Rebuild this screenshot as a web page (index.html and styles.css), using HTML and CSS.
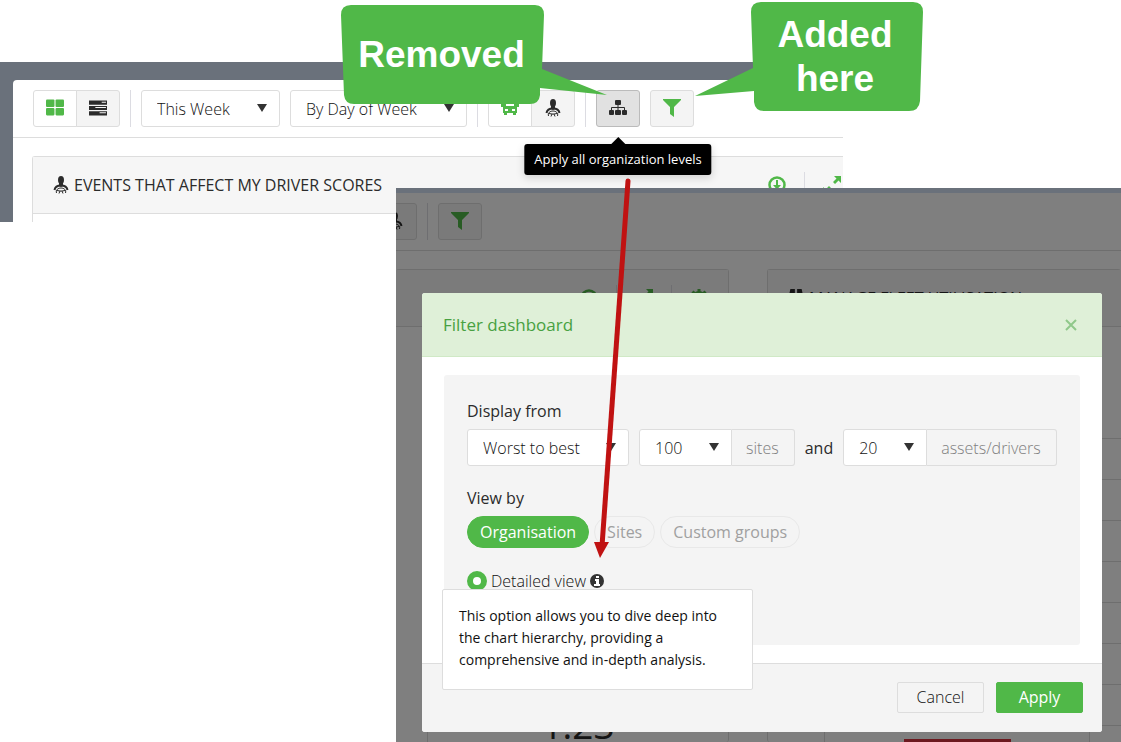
FILE: index.html
```html
<!DOCTYPE html>
<html lang="en">
<head>
  <meta charset="UTF-8">
  <meta name="viewport" content="width=device-width, initial-scale=1.0">
  <title>Filter dashboard</title>
  <link rel="stylesheet" href="styles.css">
</head>
<body>
  <!-- shared icons -->
  <svg class="sprite" aria-hidden="true">
    <symbol id="i-grid" viewBox="0 0 17 16">
      <rect width="8" height="7" rx="1"/><rect x="9" width="8" height="7" rx="1"/>
      <rect y="8" width="8" height="7" rx="1"/><rect x="9" y="8" width="8" height="7" rx="1"/>
    </symbol>
    <symbol id="i-rows" viewBox="0 0 17 16">
      <path fill-rule="evenodd" d="M0 1h17v4H0zM12 2v1h4V2zM0 6h17v4H0zM6 7v1h10V7zM0 11h17v4H0zM10 12v1h6v-1z"/>
    </symbol>
    <symbol id="i-driver" viewBox="0 0 14 18">
      <ellipse cx="7" cy="4" rx="3" ry="4"/>
      <path d="M5 7h4v3l-2 1-2-1z"/>
      <path fill="none" stroke="currentColor" stroke-width="2" d="M.5 14C1 11 3 9.500 7 9.500s6 1.500 6.500 4.500"/>
      <path fill="none" stroke="currentColor" d="M2.500 17c-1-3 1.500-5 4.500-5s5.500 2 4.500 5M3 14.500l3 .5h2l3-.5M6 15l-1 2.500M8 15l1 2.500"/>
    </symbol>
    <symbol id="i-car" viewBox="0 0 18 18">
      <path fill-rule="evenodd" d="M4 0h10l2 2v12h-1v2h-3v-2H6v2H3v-2H2V2zM5 3v4h8V3zM4 10v2h3v-2zM11 10v2h3v-2zM0 3h2v5H0zM16 3h2v5h-2z"/>
    </symbol>
    <symbol id="i-tree" viewBox="0 0 18 16">
      <rect x="6" width="6" height="5" rx="1"/><rect y="10" width="5" height="5" rx="1"/>
      <rect x="6" y="10" width="6" height="5" rx="1"/><rect x="13" y="10" width="5" height="5" rx="1"/>
      <path fill="none" stroke="currentColor" d="M9 4v7M2.500 11V7.500h13V11"/>
    </symbol>
    <symbol id="i-filter" viewBox="0 0 18 18"><path d="M0 0h18v1l-7 7v10l-4-3V8L0 1z"/></symbol>
    <symbol id="i-down" viewBox="0 0 18 18">
      <circle cx="9" cy="9" r="7.500" fill="none" stroke="currentColor" stroke-width="2.500"/>
      <path d="M8 4h2v5h3l-4 4.500L5 9h3z"/>
    </symbol>
    <symbol id="i-expand" viewBox="0 0 18 18">
      <path d="M11 0h7v7l-2.500-2.500-3.500 3.500-2-2 3.500-3.500zM7 18H0v-7l2.500 2.500L6 10l2 2-3.500 3.500z"/>
    </symbol>
    <symbol id="i-gear" viewBox="0 0 18 18">
      <circle cx="9" cy="9" r="5" fill="none" stroke="currentColor" stroke-width="4"/>
      <path fill="none" stroke="currentColor" stroke-width="3" d="M9 0v4M9 14v4M0 9h4M14 9h4M2.500 2.500l3 3M12.500 12.500l3 3M15.500 2.500l-3 3M5.500 12.500l-3 3"/>
    </symbol>
    <symbol id="i-binoculars" viewBox="0 0 14 16">
      <path d="M2 0h4v4h2V0h4l2 9v6H8V9H6v6H0V9z"/>
    </symbol>
  </svg>

  <main class="collage">
    <section class="before">
      <div class="page">
        <div class="toolbar">
          <div class="btn-group">
            <button type="button" class="btn active green" aria-label="Grid view"><svg class="icon"><use href="#i-grid"/></svg></button>
            <button type="button" class="btn" aria-label="List view"><svg class="icon"><use href="#i-rows"/></svg></button>
          </div>
          <span class="divider"></span>
          <div class="select period"><select aria-label="Period"><option>This Week</option></select></div>
          <div class="select grouping"><select aria-label="Grouping"><option>By Day of Week</option></select></div>
          <span class="divider"></span>
          <div class="btn-group">
            <button type="button" class="btn active green" aria-label="Assets"><svg class="icon"><use href="#i-car"/></svg></button>
            <button type="button" class="btn" aria-label="Drivers"><svg class="icon"><use href="#i-driver"/></svg></button>
          </div>
          <span class="divider"></span>
          <div class="has-tip">
            <button type="button" class="btn pressed" aria-label="Organization levels" aria-describedby="levelTip"><svg class="icon"><use href="#i-tree"/></svg></button>
            <div class="tip" id="levelTip" role="tooltip">Apply all organization levels</div>
          </div>
          <button type="button" class="btn green" aria-label="Filter"><svg class="icon"><use href="#i-filter"/></svg></button>
        </div>
        <div class="panel">
          <div class="panel-head">
            <svg class="head-icon"><use href="#i-driver"/></svg>
            <h2>EVENTS THAT AFFECT MY DRIVER SCORES</h2>
            <div class="actions">
              <svg class="icon"><use href="#i-down"/></svg>
              <span class="divider"></span>
              <svg class="icon"><use href="#i-expand"/></svg>
            </div>
          </div>
        </div>
      </div>
    </section>

    <section class="after">
      <div class="dashboard" aria-hidden="true">
        <div class="toolbar">
          <button type="button" class="btn cut" tabindex="-1"><svg class="icon"><use href="#i-driver"/></svg></button>
          <span class="divider"></span>
          <button type="button" class="btn green" tabindex="-1"><svg class="icon"><use href="#i-filter"/></svg></button>
        </div>
        <div class="panels">
          <div class="panel score">
            <div class="panel-head">
              <div class="actions">
                <svg class="icon"><use href="#i-down"/></svg>
                <span class="divider"></span>
                <svg class="icon"><use href="#i-expand"/></svg>
                <span class="divider"></span>
                <svg class="icon"><use href="#i-gear"/></svg>
              </div>
            </div>
            <div class="value">1.23</div>
          </div>
          <div class="panel fleet">
            <div class="panel-head">
              <svg class="head-icon"><use href="#i-binoculars"/></svg>
              <h2>MANAGE FLEET UTILISATION</h2>
            </div>
            <div class="chart">
              <div class="axis"></div>
              <div class="plot"><div class="bar"></div></div>
              <div class="lines"><i></i><i></i><i></i><i></i><i></i><i></i><i></i><i></i></div>
            </div>
          </div>
        </div>
      </div>
      <div class="backdrop"></div>

      <form class="modal" role="dialog" aria-labelledby="modalTitle">
        <header class="modal-head">
          <h1 id="modalTitle">Filter dashboard</h1>
          <button type="button" class="close" aria-label="Close">
            <svg viewBox="0 0 12 12"><path d="M1 1l10 10M11 1L1 11"/></svg>
          </button>
        </header>
        <div class="modal-body">
          <div class="well">
            <label class="field-label" for="order">Display from</label>
            <div class="row">
              <div class="select order"><select id="order"><option>Worst to best</option></select></div>
              <div class="input-group">
                <div class="select sites"><select id="sites"><option>100</option></select></div>
                <label class="addon" for="sites">sites</label>
              </div>
              <span>and</span>
              <div class="input-group">
                <div class="select assets"><select id="assets"><option>20</option></select></div>
                <label class="addon" for="assets">assets/drivers</label>
              </div>
            </div>
            <div class="field-label">View by</div>
            <div class="pills">
              <button type="button" class="pill selected">Organisation</button>
              <button type="button" class="pill">Sites</button>
              <button type="button" class="pill">Custom groups</button>
            </div>
            <div class="option">
              <input type="radio" id="detailed" name="view" checked>
              <label for="detailed">Detailed view</label>
              <svg class="info" viewBox="0 0 14 14"><circle cx="7" cy="7" r="7"/><path d="M6 2h3v2H6zM5 5h4v5h1v2H4v-2h2V7H5z"/></svg>
              <div class="popover">This option allows you to dive deep into the chart hierarchy, providing a comprehensive and in-depth analysis.</div>
            </div>
          </div>
        </div>
        <footer class="modal-foot">
          <button type="button" class="action">Cancel</button>
          <button type="submit" class="action primary">Apply</button>
        </footer>
      </form>
    </section>

    <!-- annotations -->
    <div class="callout removed">
      <svg viewBox="0 0 266 100"><path d="M10 0H194Q203 0 203 10L201 64 266 90 199 83 199 90Q198 99 189 99H13Q4 99 3 90L0 10Q0 0 10 0z"/></svg>
      <p>Removed</p>
    </div>
    <div class="callout added">
      <svg viewBox="0 0 228 110"><path d="M66 0H218Q228 0 228 10L225 99Q224 109 214 109H69Q60 109 59 100L59 89 0 94 58 66 56 10Q56 0 66 0z"/></svg>
      <p>Added<br>here</p>
    </div>
    <svg class="arrow" viewBox="0 0 40 382"><path class="shaft" d="M34 3L8 368"/><path d="M0 364h15L6 380z"/></svg>
  </main>
</body>
</html>
```
FILE: styles.css
```css
* {
  box-sizing: border-box;
}

body {
  margin: 0;
  background: #fff;
  color: #2b2b2b;
  font-family: "Open Sans", Arial, sans-serif;
  font-size: 16px;
  line-height: 24px;
}

h1, h2, p {
  margin: 0;
}

button, select {
  font: inherit;
  color: inherit;
}

.sprite {
  position: absolute;
  width: 0;
  height: 0;
}

.icon {
  width: 18px;
  height: 18px;
  fill: currentColor;
}

.green {
  color: #50b848;
}

.collage {
  position: relative;
  padding-top: 62px;
  overflow: hidden;
}

/* toolbar */
.toolbar {
  display: flex;
  gap: 10px;
  padding: 10px 20px;
  border-bottom: 1px solid #ddd;
}

.divider {
  flex: none;
  width: 1px;
  background: #dcdce2;
}

.btn-group {
  display: flex;
}

.btn {
  flex: none;
  display: flex;
  align-items: center;
  justify-content: center;
  width: 44px;
  height: 37px;
  padding: 0 0 2px;
  border: 1px solid #ddd;
  border-radius: 3px;
  background: #f4f4f4;
}

.btn-group .btn:first-child {
  border-radius: 3px 0 0 3px;
}

.btn-group .btn:last-child {
  margin-left: -1px;
  border-radius: 0 3px 3px 0;
}

.btn.active {
  background: #fff;
}

.btn.pressed {
  background: #e1e1e1;
  border-color: #bbb;
}

.select {
  position: relative;
  flex: none;
  height: 37px;
}

.select select {
  appearance: none;
  width: 100%;
  height: 100%;
  padding: 0 15px;
  border: 1px solid #ddd;
  border-radius: 3px;
  background: #fff;
  color: #111;
  font-weight: 300;
}

.select::after {
  content: "";
  position: absolute;
  right: 13px;
  top: 14px;
  border: 5px solid transparent;
  border-top: 8px solid #333;
  border-bottom: 0;
  pointer-events: none;
}

.period {
  width: 139px;
}

.grouping {
  width: 177px;
}

.has-tip {
  position: relative;
}

.tip {
  position: absolute;
  z-index: 2;
  top: 54px;
  left: 50%;
  transform: translateX(-50%);
  padding: 3px 10px 4px;
  border-radius: 3px;
  background: #000;
  color: #fff;
  font-size: 13px;
  white-space: nowrap;
  box-shadow: 0 3px 8px rgba(0, 0, 0, .15);
}

.tip::before {
  content: "";
  position: absolute;
  left: 50%;
  top: -7px;
  margin-left: -8px;
  border: 8px solid transparent;
  border-top: 0;
  border-bottom-color: #000;
}

/* panels */
.panel {
  border: 1px solid #ddd;
  border-radius: 3px;
}

.panel-head {
  display: flex;
  align-items: center;
  height: 57px;
  padding: 0 20px;
  border-bottom: 1px solid #ddd;
  background: #f6f6f6;
}

.panel-head h2 {
  font-size: 16px;
  font-weight: 400;
  white-space: nowrap;
}

.head-icon {
  width: 16px;
  height: 18px;
  margin-right: 5px;
  fill: currentColor;
}

.actions {
  display: flex;
  align-items: center;
  gap: 18px;
  margin-left: auto;
  color: #50b848;
}

.actions .divider {
  height: 26px;
}

/* old toolbar */
.before {
  max-width: 843px;
  height: 160px;
  padding: 18px 0 0 13px;
  overflow: hidden;
  background: #6a717b;
}

.page {
  height: 142px;
  border-radius: 4px 0 0;
  background: #fff;
}

.page .panel {
  height: 80px;
  margin: 18px 0 0 19px;
  border-right: 0;
  border-radius: 3px 0 0;
}

.page .panel-head {
  padding-right: 2px;
}

/* new dashboard with the dialog on top */
.after {
  position: relative;
  display: grid;
  margin: -34px 0 0 396px;
  overflow: hidden;
  background: #fff;
  border-top: 5px solid #6a717b;
}

.dashboard, .backdrop, .modal {
  grid-area: 1 / 1;
  min-width: 0;
}

.backdrop {
  z-index: 1;
  background: rgba(0, 0, 0, .5);
}

.dashboard {
  display: flex;
  flex-direction: column;
  overflow: hidden;
}

.dashboard .toolbar {
  padding-left: 0;
}

.cut {
  margin-left: -23px;
}

.panels {
  flex: 1;
  display: flex;
  gap: 38px;
  padding-top: 18px;
}

.panels .panel {
  border-bottom: 0;
}

.score {
  display: flex;
  flex-direction: column;
  width: 333px;
  border-left: 0;
}

.value {
  flex: 1;
  display: flex;
  align-items: flex-end;
  justify-content: center;
  margin-left: 31px;
  border-left: 1px solid #ddd;
  font-size: 37px;
  line-height: 34px;
}

.fleet {
  flex: 1;
  display: flex;
  flex-direction: column;
  border-right: 0;
}

.chart {
  flex: 1;
  display: grid;
  grid-template-columns: 56px 266px 1fr;
}

.plot {
  display: flex;
  align-items: flex-end;
  justify-content: center;
  border: solid #ddd;
  border-width: 0 1px;
}

.bar {
  width: 107px;
  height: 3px;
  background: #d9333f;
}

.lines {
  padding-top: 71px;
}

.lines i {
  display: block;
  height: 41px;
  border-bottom: 1px solid #ddd;
}

/* dialog */
.modal {
  z-index: 2;
  margin: 100px 19px 10px 26px;
  border-radius: 3px;
  background: #fff;
}

.modal-head {
  display: flex;
  align-items: center;
  justify-content: space-between;
  height: 64px;
  padding: 0 25px 0 21px;
  border-bottom: 1px solid #d0e9c6;
  border-radius: 3px 3px 0 0;
  background: #dff0d8;
}

.modal-head h1 {
  color: #48a141;
  font-size: 17px;
  font-weight: 500;
}

.close {
  width: 12px;
  height: 12px;
  padding: 0;
  border: 0;
  background: none;
}

.close svg {
  display: block;
  fill: none;
  stroke: #8fc88a;
  stroke-width: 2;
}

.modal-body {
  padding: 18px 22px;
}

.well {
  min-height: 270px;
  padding: 24px 23px;
  border-radius: 3px;
  background: #f4f4f4;
}

.field-label {
  display: block;
  margin-bottom: 6px;
}

.row {
  display: flex;
  align-items: center;
  gap: 10px;
  margin-bottom: 20px;
}

.input-group {
  display: flex;
}

.input-group select {
  border-radius: 3px 0 0 3px;
}

.addon {
  height: 37px;
  padding: 0 15px 0 14px;
  border: 1px solid #ddd;
  border-left: 0;
  border-radius: 0 3px 3px 0;
  color: #808080;
  font-weight: 300;
  line-height: 36px;
}

.order {
  width: 162px;
}

.sites {
  width: 93px;
}

.assets {
  width: 84px;
}

.pills {
  display: flex;
  gap: 5px;
  margin-bottom: 21px;
}

.pill {
  height: 32px;
  padding: 0 12px;
  border: 1px solid #e8e8e8;
  border-radius: 16px;
  background: #f4f4f4;
  color: #a0a0a0;
}

.pill.selected {
  border-color: #50b848;
  background: #50b848;
  color: #fff;
}

.option {
  position: relative;
  display: flex;
  align-items: center;
  gap: 4px;
  color: #111;
  font-weight: 300;
}

.option input {
  appearance: none;
  width: 20px;
  height: 20px;
  margin: 0;
  border: 6px solid #50b848;
  border-radius: 50%;
  background: #fff;
}

.info {
  width: 14px;
  height: 14px;
  fill: #333;
}

.info path {
  fill: #fff;
}

.popover {
  position: absolute;
  left: -25px;
  top: 20px;
  width: 311px;
  padding: 15px 16px 18px;
  border: 1px solid #ddd;
  border-radius: 2px;
  background: #fff;
  font-size: 14px;
  font-weight: 400;
  line-height: 22px;
}

.modal-foot {
  display: flex;
  justify-content: flex-end;
  gap: 12px;
  padding: 18px 19px 19px;
  border-top: 1px solid #ddd;
  border-radius: 0 0 3px 3px;
  background: #f4f4f4;
}

.action {
  width: 87px;
  height: 31px;
  padding: 0 0 2px;
  border: 1px solid #ddd;
  border-radius: 2px;
  background: #f4f4f4;
  color: #111;
  font-weight: 300;
}

.action.primary {
  border-color: #50b848;
  background: #50b848;
  color: #fff;
  font-weight: 400;
}

/* annotations */
.callout {
  position: absolute;
  z-index: 3;
  color: #fff;
  font: bold 37px/44px "Liberation Sans", Arial, sans-serif;
  text-align: center;
}

.callout svg {
  display: block;
  width: 100%;
  fill: #50b848;
}

.callout p {
  position: absolute;
  top: 0;
}

.removed {
  left: 341px;
  top: 5px;
  width: 266px;
}

.removed p {
  left: 0;
  width: 201px;
  padding-top: 28px;
}

.added {
  left: 695px;
  top: 2px;
  width: 228px;
}

.added p {
  right: 0;
  width: 176px;
  padding-top: 11px;
}

.arrow {
  position: absolute;
  z-index: 4;
  left: 594px;
  top: 178px;
  width: 40px;
  height: 382px;
  fill: #c01212;
}

.shaft {
  stroke: #c01212;
  stroke-width: 5;
  stroke-linecap: round;
}
```
